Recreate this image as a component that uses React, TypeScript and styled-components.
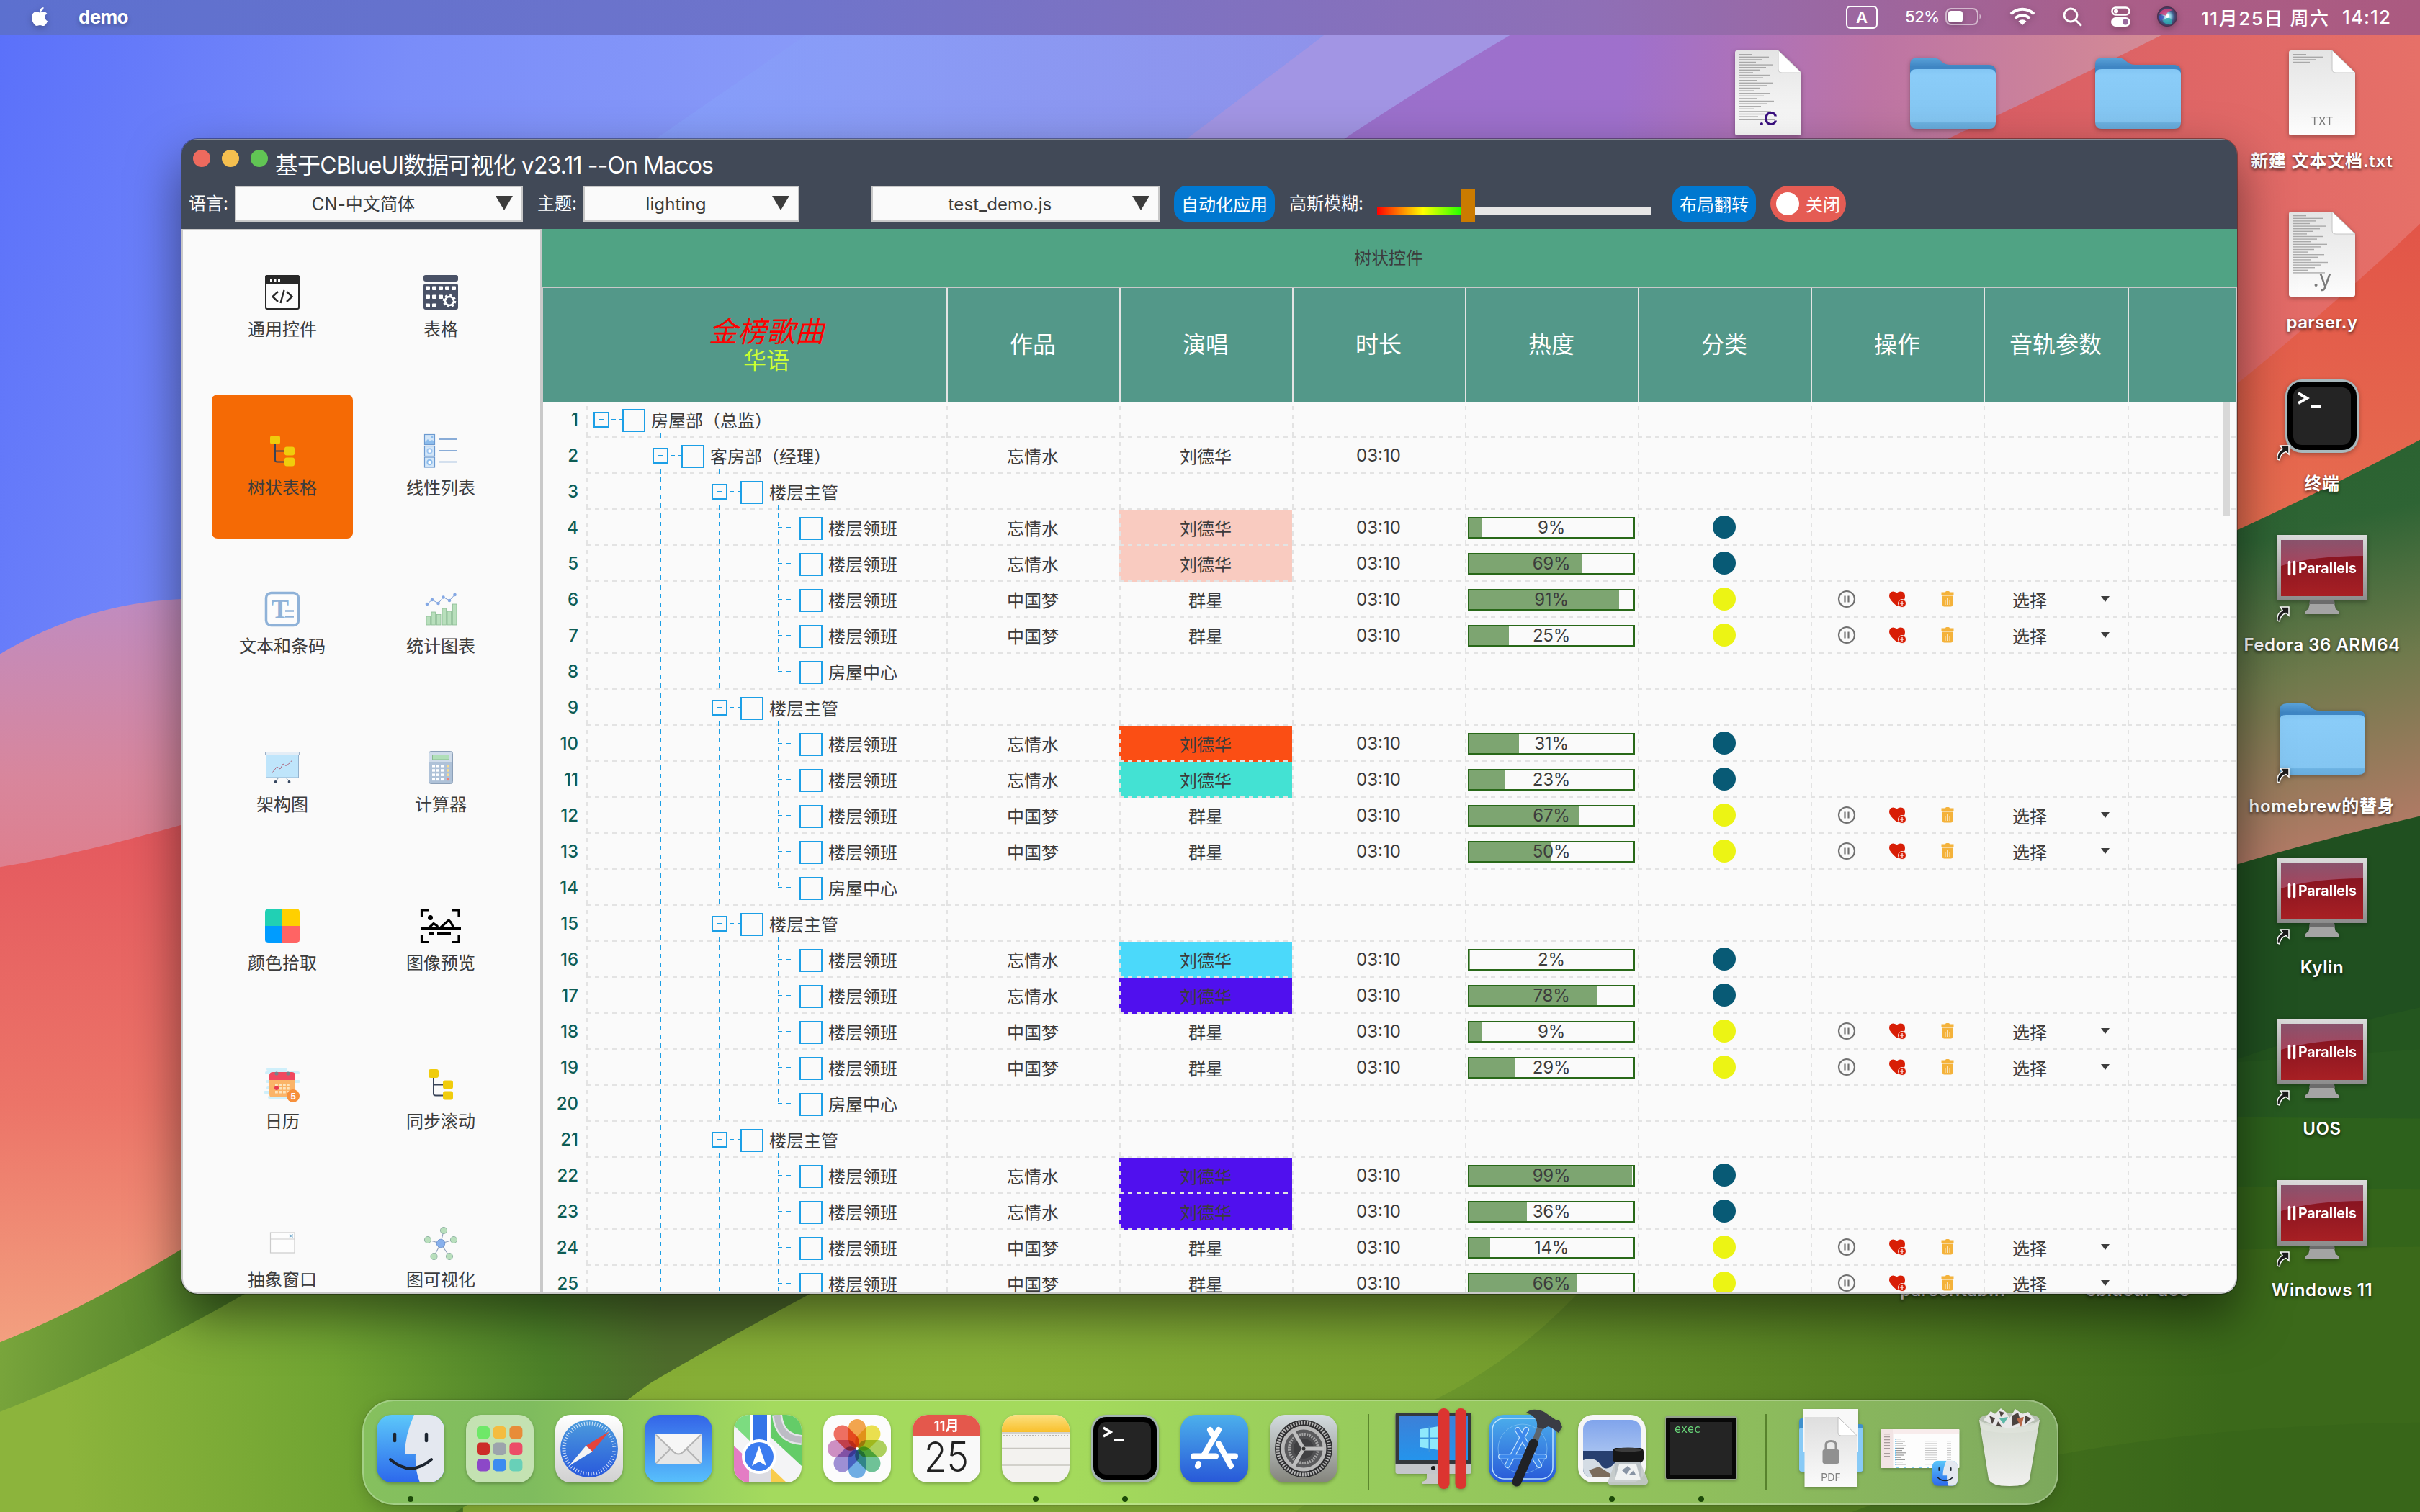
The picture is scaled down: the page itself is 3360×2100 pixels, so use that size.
import React from "react";
import styled, { createGlobalStyle, css } from "styled-components";
import { FaApple } from "react-icons/fa";

const sans = `Inter, "Noto Sans CJK SC", sans-serif`;

const GlobalStyle = createGlobalStyle`
  body { margin: 0; background: #3a661c; }
  *, *::before, *::after { box-sizing: border-box; }
`;

/* ---------- desktop ---------- */

const Desktop = styled.div`
  position: relative;
  width: 3360px;
  height: 2100px;
  overflow: hidden;
  font-family: ${sans};
  color: #3c3c3c;
`;

const WallpaperSvg = styled.svg`
  position: absolute;
  inset: 0;
  width: 100%;
  height: 100%;
`;

function Wallpaper() {
  return (
    <WallpaperSvg viewBox="0 0 1568 980" preserveAspectRatio="none">
      <defs>
        <linearGradient id="sky" gradientUnits="userSpaceOnUse" x1="0" y1="0" x2="860" y2="240">
          <stop offset="0" stopColor="#5a70fa" />
          <stop offset="0.3" stopColor="#7a8df9" />
          <stop offset="0.6" stopColor="#8a9bf8" />
          <stop offset="1" stopColor="#8f92ea" />
        </linearGradient>
        <linearGradient id="skyLight" gradientUnits="userSpaceOnUse" x1="430" y1="0" x2="860" y2="0">
          <stop offset="0" stopColor="#86a0fb" />
          <stop offset="1" stopColor="#8f92ea" />
        </linearGradient>
        <linearGradient id="violet" gradientUnits="userSpaceOnUse" x1="870" y1="0" x2="1400" y2="70">
          <stop offset="0" stopColor="#9a70cc" />
          <stop offset="0.35" stopColor="#9f70cc" />
          <stop offset="0.65" stopColor="#bd74a4" />
          <stop offset="1" stopColor="#d68c94" />
        </linearGradient>
        <linearGradient id="leftPink" x1="0" y1="0" x2="0" y2="1">
          <stop offset="0" stopColor="#c08cc0" />
          <stop offset="0.5" stopColor="#d8869c" />
          <stop offset="1" stopColor="#e47880" />
        </linearGradient>
        <linearGradient id="leftRed" x1="0" y1="0" x2="0" y2="1">
          <stop offset="0" stopColor="#e4585e" />
          <stop offset="0.5" stopColor="#ec7468" />
          <stop offset="1" stopColor="#f4a884" />
        </linearGradient>
        <linearGradient id="rightRed" gradientUnits="userSpaceOnUse" x1="1265" y1="0" x2="1568" y2="0">
          <stop offset="0" stopColor="#d85c64" />
          <stop offset="1" stopColor="#e67068" />
        </linearGradient>
        <linearGradient id="rightOrange" x1="0" y1="0" x2="0" y2="1">
          <stop offset="0" stopColor="#e25548" />
          <stop offset="1" stopColor="#e87452" />
        </linearGradient>
        <linearGradient id="brown" gradientUnits="userSpaceOnUse" x1="1440" y1="300" x2="1500" y2="560">
          <stop offset="0" stopColor="#2a6230" />
          <stop offset="0.2" stopColor="#2e6434" />
          <stop offset="0.55" stopColor="#6f7a4c" />
          <stop offset="1" stopColor="#b87a68" />
        </linearGradient>
        <linearGradient id="grass" x1="0" y1="0" x2="1" y2="0">
          <stop offset="0" stopColor="#86ac34" />
          <stop offset="0.3" stopColor="#86b038" />
          <stop offset="0.6" stopColor="#759e2e" />
          <stop offset="1" stopColor="#557f24" />
        </linearGradient>
        <linearGradient id="grassFar" gradientUnits="userSpaceOnUse" x1="850" y1="0" x2="1440" y2="0">
          <stop offset="0" stopColor="#739e30" />
          <stop offset="0.6" stopColor="#558022" />
          <stop offset="1" stopColor="#3b691a" />
        </linearGradient>
        <linearGradient id="hillBack" gradientUnits="userSpaceOnUse" x1="0" y1="850" x2="160" y2="870">
          <stop offset="0" stopColor="#7aa63c" />
          <stop offset="1" stopColor="#467624" />
        </linearGradient>
        <linearGradient id="hillFront" gradientUnits="userSpaceOnUse" x1="40" y1="900" x2="430" y2="860">
          <stop offset="0" stopColor="#8cb43c" />
          <stop offset="0.45" stopColor="#70a432" />
          <stop offset="0.8" stopColor="#4c8028" />
          <stop offset="1" stopColor="#4e6c2c" />
        </linearGradient>
      </defs>
      <rect width="1568" height="980" fill="url(#sky)" />
      <path d="M555 0 Q490 45 422 92 L500 200 H1000 V0 Z" fill="url(#skyLight)" opacity="0.7" />
      <path d="M888 0 L769 90 L900 150 H1200 V0 Z" fill="#a295e4" />
      <path d="M1018 0 Q940 44 871 90 L871 140 H1568 V0 Z" fill="url(#violet)" />
      <path d="M1440 0 L1402 22 Q1330 58 1262 90 L1250 300 H1568 V0 Z" fill="url(#rightRed)" />
      <path d="M1568 145 Q1510 200 1449 249 V400 H1568 Z" fill="url(#rightOrange)" />
      <path d="M1568 285 Q1510 316 1440 348 V600 H1568 Z" fill="url(#brown)" />
      <path d="M1568 529 Q1500 545 1440 563 V980 H1568 Z" fill="#205020" />
      <path d="M1568 653 Q1500 668 1440 690 V980 H1568 Z" fill="#24561f" />
      <path d="M1568 680 L1440 689 V980 H1568 Z" fill="#275a20" />
      <path d="M1568 725 L1440 724 V980 H1568 Z" fill="#2d611c" />
      <path d="M1568 771 L1440 769 V980 H1568 Z" fill="#34651a" />
      <path d="M1568 808 L1440 810 V980 H1568 Z" fill="#3b691a" />
      <path d="M0 424 Q60 388 130 388 V620 H0 Z" fill="url(#leftPink)" />
      <path d="M0 562 Q60 552 130 531 V900 H0 Z" fill="url(#leftRed)" />
      <path d="M500 830 H1440 V980 H290 Z" fill="url(#grass)" />
      <path d="M1030 830 Q985 880 930 907 Q880 950 839 980 H1568 V830 Z" fill="url(#grassFar)" />
      <path d="M1200 980 Q1340 925 1568 922 V980 Z" fill="#33601a" opacity="0.35" />
      <path d="M0 870 Q60 846 130 802 H300 V980 H0 Z" fill="url(#hillBack)" />
      <path d="M0 915 Q80 884 158 839 L200 820 H560 Q480 862 422 896 Q360 942 295 980 H0 Z" fill="url(#hillFront)" />
    </WallpaperSvg>
  );
}

/* ---------- menu bar ---------- */

const MenuBar = styled.header`
  position: relative;
  display: flex;
  align-items: center;
  height: 48px;
  padding: 0 36px 2px 40px;
  background: linear-gradient(90deg, #5c70cf 0%, #6f74cb 33%, #8f6fb6 66%, #aa5e88 88%, #ab5a80 100%);
  color: #fff;
  font-size: 26px;
  svg { flex: none; filter: drop-shadow(0 3px 4px rgba(0, 0, 0, 0.25)); }
`;

const AppName = styled.div`
  margin-left: 39px;
  font-weight: 700;
  font-size: 26px;
  letter-spacing: -0.7px;
  text-shadow: 0 3px 6px rgba(0, 0, 0, 0.25);
  flex: 1;
`;

const InputBadge = styled.div`
  width: 44px;
  height: 32px;
  margin-top: 2px;
  border: 2px solid #fff;
  border-radius: 6px;
  display: grid;
  place-items: center;
  font-size: 22px;
  font-weight: 600;
`;

const StatusItem = styled.div<{ $gap: number; $size?: number; $width?: number; $track?: number }>`
  display: flex;
  align-items: center;
  white-space: nowrap;
  margin-left: ${(p) => p.$gap}px;
  width: ${(p) => (p.$width ? `${p.$width}px` : "auto")};
  font-size: ${(p) => p.$size ?? 26}px;
  font-weight: 500;
  letter-spacing: ${(p) => p.$track ?? -0.4}px;
`;

function TopBar() {
  return (
    <MenuBar>
      <FaApple size={30} color="#fff" />
      <AppName>demo</AppName>
      <InputBadge>A</InputBadge>
      <StatusItem $gap={38} $size={22} $width={56}>52%</StatusItem>
      <svg width="52" height="24" viewBox="0 0 52 24">
        <rect x="1" y="1" width="44" height="22" rx="7" fill="none" stroke="#fff" strokeOpacity="0.55" strokeWidth="2" />
        <rect x="4" y="4" width="20" height="16" rx="4" fill="#fff" />
        <path d="M47.5 8 Q51 12 47.5 16 Z" fill="#fff" fillOpacity="0.55" />
      </svg>
      <StatusItem $gap={37}>
        <svg width="36" height="26" viewBox="0 0 36 26" fill="none" stroke="#fff" strokeWidth="4">
          <path d="M2 9.500 A22.500 22.500 0 0 1 34 9.500" />
          <path d="M8 15.500 A14 14 0 0 1 28 15.500" />
          <path d="M18 25 L12.500 19.500 A8 8 0 0 1 23.500 19.500 Z" fill="#fff" stroke="none" />
        </svg>
      </StatusItem>
      <StatusItem $gap={38}>
        <svg width="27" height="27" viewBox="0 0 27 27" fill="none" stroke="#fff" strokeWidth="2.800" strokeLinecap="round">
          <circle cx="11" cy="11" r="9" />
          <path d="M18 18 L25 25" />
        </svg>
      </StatusItem>
      <StatusItem $gap={40}>
        <svg width="27" height="28" viewBox="0 0 27 28">
          <rect x="1.500" y="1.500" width="24" height="10" rx="5" fill="none" stroke="#fff" strokeWidth="2.500" />
          <circle cx="7" cy="6.500" r="3" fill="#fff" />
          <rect x="0" y="15" width="27" height="13" rx="6.500" fill="#fff" />
          <circle cx="20" cy="21.500" r="4" fill="#98689c" />
        </svg>
      </StatusItem>
      <StatusItem $gap={36}>
        <svg width="30" height="30" viewBox="0 0 30 30">
          <defs>
            <radialGradient id="siri">
              <stop offset="0" stopColor="#fff" />
              <stop offset="0.35" stopColor="#8fd0e0" />
              <stop offset="0.65" stopColor="#3f5a8c" />
              <stop offset="1" stopColor="#4a2a48" />
            </radialGradient>
          </defs>
          <circle cx="15" cy="15" r="14" fill="url(#siri)" />
          <path d="M4 11 Q10 1 23 6 Q13 8 14 14 Z" fill="#d8407a" opacity="0.8" />
          <path d="M16 16 Q24 18 21 26 Q12 27 9 21 Z" fill="#2fa8b0" opacity="0.85" />
          <path d="M3 14 Q7 12 12 15 Q8 20 5 21 Z" fill="#4058c0" opacity="0.8" />
          <circle cx="15.500" cy="14.500" r="2.500" fill="#fff" />
        </svg>
      </StatusItem>
      <StatusItem $gap={32} $width={195} $track={1.55}>11月25日 周六</StatusItem>
      <StatusItem $gap={1} $width={72} $track={1.1}>14:12</StatusItem>
    </MenuBar>
  );
}

/* ---------- desktop items ---------- */

const IconSpot = styled.div<{ $x: number; $y: number }>`
  position: absolute;
  left: ${(p) => p.$x - 128}px;
  top: ${(p) => p.$y}px;
  width: 256px;
  height: 190px;
  display: flex;
  flex-direction: column;
  align-items: center;
  svg { overflow: visible; filter: drop-shadow(0 2px 3px rgba(0, 0, 0, 0.3)); }
`;

const IconArt = styled.div<{ $lift?: number }>`
  height: 136px;
  display: flex;
  align-items: center;
  padding-bottom: ${(p) => p.$lift ?? 0}px;
`;

const IconLabel = styled.div<{ $pad: number; $track?: number }>`
  height: 36px;
  margin-top: ${(p) => p.$pad}px;
  line-height: 36px;
  color: #fff;
  font-size: 24px;
  font-weight: 600;
  letter-spacing: ${(p) => p.$track ?? 0.4}px;
  white-space: nowrap;
  text-shadow: 0 2px 4px rgba(0, 0, 0, 0.7);
`;

function Folder() {
  return (
    <svg width="119" height="99" viewBox="0 0 119 99">
      <defs>
        <linearGradient id="folderBack" x1="0" y1="0" x2="0" y2="1">
          <stop offset="0" stopColor="#5aa2d8" />
          <stop offset="0.25" stopColor="#3f86c4" />
        </linearGradient>
        <linearGradient id="folderFront" x1="0" y1="0" x2="0" y2="1">
          <stop offset="0" stopColor="#83c6f4" />
          <stop offset="0.1" stopColor="#8accf8" />
          <stop offset="0.88" stopColor="#84c6f2" />
          <stop offset="0.9" stopColor="#6cb2e2" />
          <stop offset="1" stopColor="#68acdc" />
        </linearGradient>
      </defs>
      <path d="M0 10 Q0 0 10 0 H30 Q38 0 43 5 Q48 10 56 10 H110 Q119 10 119 20 V50 H0 Z" fill="url(#folderBack)" />
      <path d="M0 24 Q0 16 9 16 H110 Q119 16 119 24 V90 Q119 99 110 99 H9 Q0 99 0 90 Z" fill="url(#folderFront)" />
    </svg>
  );
}

function Doc({ ext, color, lines, size }: { ext: string; color: string; lines: number; size: number }) {
  const rows = Array.from({ length: lines }, (_, i) => i);
  return (
    <svg width="92" height="118" viewBox="0 0 92 118">
      <defs>
        <linearGradient id="paper" x1="0" y1="0" x2="0" y2="1">
          <stop offset="0" stopColor="#e4e4e4" />
          <stop offset="0.6" stopColor="#f2f2f2" />
          <stop offset="1" stopColor="#fdfdfd" />
        </linearGradient>
      </defs>
      <path d="M3 0 H60 L92 31 V115 Q92 118 89 118 H3 Q0 118 0 115 V3 Q0 0 3 0 Z" fill="url(#paper)" />
      {rows.map((i) => (
        <rect key={i} x="6" y={5 + i * 3.6} width={18 + ((i * 23) % 32)} height="1.400" fill="#858585" opacity="0.65" />
      ))}
      <path d="M60 0 L92 31 H65 Q60 31 60 26 Z" fill="#fff" stroke="#c4c4c4" strokeWidth="1" />
      <text x="46" y="104" textAnchor="middle" fontFamily={sans} fontSize={size} fontWeight={ext === ".C" ? 600 : 400} fill={color}>{ext}</text>
    </svg>
  );
}

function TerminalTile() {
  return (
    <svg width="102" height="102" viewBox="0 0 102 102">
      <rect x="0" y="0" width="102" height="102" rx="23" fill="#a8b8bc" />
      <rect x="3" y="3" width="96" height="95" rx="20" fill="#000" />
      <rect x="11" y="11" width="80" height="80" rx="12" fill="#242424" />
      <path d="M18 19 L30 26 L18 33" fill="none" stroke="#fff" strokeWidth="4" />
      <path d="M35 38 H49" stroke="#fff" strokeWidth="4" />
    </svg>
  );
}

function Monitor() {
  return (
    <svg width="126" height="111" viewBox="0 0 126 111">
      <defs>
        <linearGradient id="bezel" x1="0" y1="0" x2="0" y2="1">
          <stop offset="0" stopColor="#dcdcdc" />
          <stop offset="1" stopColor="#8c8c8c" />
        </linearGradient>
        <linearGradient id="screenRed" x1="0" y1="0" x2="0" y2="1">
          <stop offset="0" stopColor="#7c1020" />
          <stop offset="1" stopColor="#a82024" />
        </linearGradient>
        <linearGradient id="glare" x1="0" y1="0" x2="0" y2="1">
          <stop offset="0" stopColor="#8c6480" />
          <stop offset="1" stopColor="#b0506c" />
        </linearGradient>
      </defs>
      <path d="M47 91 H79 L82 103 Q87 105 87 110 H39 Q39 105 44 103 Z" fill="#a4a4a4" />
      <path d="M46 91 H80 L81 96 H45 Z" fill="#6c6c6c" />
      <rect x="0" y="0" width="126" height="91" fill="url(#bezel)" />
      <rect x="6" y="7" width="114" height="78" fill="url(#screenRed)" />
      <path d="M6 7 H120 V29 Q50 29 6 43 Z" fill="url(#glare)" opacity="0.8" />
      <path d="M17.500 37.500 V54.500 M24.500 37.500 V54.500" stroke="#fff" strokeWidth="3.600" strokeLinecap="round" />
      <text x="30" y="53" fontFamily={sans} fontSize="20" fontWeight="700" fill="#fff" textLength="81" lengthAdjust="spacingAndGlyphs">Parallels</text>
    </svg>
  );
}

const AliasBadge = styled.svg`
  position: absolute;
  left: 65px;
  top: 108px;
`;

function Alias() {
  return (
    <AliasBadge width="18" height="22" viewBox="0 0 18 22">
      <path d="M5 1 H17 V13 L13 9.500 Q5 12 4 21 L1 20 Q0 10 8 5.500 Z" fill="#1c1c1c" stroke="#fff" strokeWidth="1.500" />
    </AliasBadge>
  );
}

function DesktopItems() {
  return (
    <>
      <IconSpot $x={2455} $y={61}><IconArt><Doc ext=".C" color="#3a1080" lines={26} size={26} /></IconArt></IconSpot>
      <IconSpot $x={2711} $y={61}><IconArt><Folder /></IconArt></IconSpot>
      <IconSpot $x={2968} $y={61}><IconArt><Folder /></IconArt></IconSpot>
      <IconSpot $x={3224} $y={61}>
        <IconArt><Doc ext="TXT" color="#7a7a7a" lines={4} size={16} /></IconArt>
        <IconLabel $pad={9} $track={0.8}>新建 文本文档.txt</IconLabel>
      </IconSpot>
      <IconSpot $x={3224} $y={285}>
        <IconArt><Doc ext=".y" color="#7a7a7a" lines={23} size={30} /></IconArt>
        <IconLabel $pad={9}>parser.y</IconLabel>
      </IconSpot>
      <IconSpot $x={3224} $y={510}>
        <IconArt><TerminalTile /></IconArt>
        <Alias />
        <IconLabel $pad={8}>终端</IconLabel>
      </IconSpot>
      <IconSpot $x={3224} $y={734}>
        <IconArt $lift={8}><Monitor /></IconArt>
        <Alias />
        <IconLabel $pad={8} $track={0.5}>Fedora 36 ARM64</IconLabel>
      </IconSpot>
      <IconSpot $x={3224} $y={958}>
        <IconArt><Folder /></IconArt>
        <Alias />
        <IconLabel $pad={8} $track={0.7}>homebrew的替身</IconLabel>
      </IconSpot>
      {["Kylin", "UOS", "Windows 11"].map((name, i) => (
        <IconSpot key={name} $x={3224} $y={1182 + i * 224}>
          <IconArt $lift={8}><Monitor /></IconArt>
          <Alias />
          <IconLabel $pad={8} $track={0.6}>{name}</IconLabel>
        </IconSpot>
      ))}
      <IconSpot $x={2711} $y={1630}><IconArt /><IconLabel $pad={8}>parser.tab.h</IconLabel></IconSpot>
      <IconSpot $x={2968} $y={1630}><IconArt /><IconLabel $pad={8}>cblueui-doc</IconLabel></IconSpot>
    </>
  );
}

/* ---------- application window ---------- */

const AppWindow = styled.main`
  position: absolute;
  left: 252px;
  top: 193px;
  width: 2854px;
  height: 1604px;
  display: flex;
  flex-direction: column;
  border-radius: 22px;
  overflow: hidden;
  background: #414957;
`;

const WindowShadow = styled.div`
  position: absolute;
  left: 252px;
  top: 193px;
  width: 2854px;
  height: 1604px;
  border-radius: 22px;
  box-shadow: 0 0 0 1px rgba(0, 0, 0, 0.35), 0 30px 70px rgba(0, 0, 0, 0.5);
`;

const WindowHead = styled.div`
  flex: none;
  height: 125px;
  box-shadow: inset 0 2px 0 #8a8f98;
`;

const TitleRow = styled.div`
  display: flex;
  align-items: flex-start;
  height: 65px;
  padding: 15px 0 0 16px;
`;

const Light = styled.span<{ $color: string }>`
  width: 24px;
  height: 24px;
  border-radius: 50%;
  margin-right: 16px;
  background: ${(p) => p.$color};
`;

const WindowTitle = styled.h1`
  margin: 0 0 0 -6px;
  line-height: 43px;
  font-size: 32px;
  font-weight: 400;
  color: #fff;
  letter-spacing: -0.88px;
  white-space: pre;
`;

const Toolbar = styled.div`
  display: flex;
  height: 50px;
  padding-left: 10px;
`;

const ToolLabel = styled.label<{ $width: number; $gap?: number }>`
  flex: none;
  width: ${(p) => p.$width}px;
  margin-left: ${(p) => p.$gap ?? 0}px;
  line-height: 49px;
  font-size: 24px;
  color: #fff;
  white-space: nowrap;
`;

const SelectBox = styled.div<{ $width: number; $gap?: number }>`
  flex: none;
  display: flex;
  align-items: center;
  width: ${(p) => p.$width}px;
  margin-left: ${(p) => p.$gap ?? 0}px;
  border: 2px solid #c8c8c8;
  background: #fafafa;
  font-size: 24px;
  letter-spacing: 0.1px;
  span { flex: 1; text-align: center; line-height: 47px; padding-right: 7px; }
  svg { margin: 0 12px 2px 0; }
`;

const PillButton = styled.button<{ $width: number; $gap: number }>`
  flex: none;
  width: ${(p) => p.$width}px;
  margin-left: ${(p) => p.$gap}px;
  padding: 0 0 1px;
  border: 0;
  border-radius: 18px;
  background: #0078d0;
  color: #fff;
  font: 400 24px ${sans};
`;

const Slider = styled.div`
  flex: none;
  width: 380px;
  display: flex;
  align-items: flex-end;
`;

const SliderFill = styled.div`
  width: 116px;
  height: 10px;
  margin-bottom: 10px;
  background: linear-gradient(90deg, #ff0000, #ffff00 55%, #28ff00);
`;

const SliderKnob = styled.div`
  width: 20px;
  height: 46px;
  background: #cb7b00;
`;

const SliderRest = styled.div`
  flex: 1;
  height: 10px;
  margin-bottom: 10px;
  background: #e6e6e6;
`;

const Toggle = styled.div`
  flex: none;
  display: flex;
  align-items: center;
  width: 105px;
  height: 50px;
  margin-left: 20px;
  padding: 0 0 1px 8px;
  gap: 9px;
  border-radius: 25px;
  background: #e55c54;
  color: #fff;
  font-size: 24px;
  i { width: 32px; height: 32px; border-radius: 50%; background: #fff; }
`;

function Select({ text, width, gap }: { text: string; width: number; gap?: number }) {
  return (
    <SelectBox $width={width} $gap={gap}>
      <span>{text}</span>
      <svg width="24" height="20" viewBox="0 0 24 20"><path d="M0 0 H24 L12 20 Z" fill="#3c3c3c" /></svg>
    </SelectBox>
  );
}

const Body = styled.div`
  flex: 1;
  min-height: 0;
  display: flex;
`;

const Sidebar = styled.nav`
  flex: none;
  width: 500px;
  padding: 8px 20px 0 40px;
  border: 2px solid #c9c9c9;
  border-bottom-left-radius: 22px;
  background: #fafafa;
  display: grid;
  grid-template-columns: 196px 196px;
  grid-auto-rows: 200px;
  gap: 20px 24px;
  align-content: start;
  overflow: hidden;
`;

const NavTile = styled.a<{ $active?: boolean }>`
  display: flex;
  flex-direction: column;
  align-items: center;
  padding-top: 54px;
  border-radius: 8px;
  font-size: 24px;
  white-space: nowrap;
  color: #3c3c3c;
  background: ${(p) => (p.$active ? "#f56a05" : "transparent")};
  svg { flex: none; overflow: visible; }
  span { line-height: 36px; margin-top: 10px; }
`;

const TreeGlyph = () => (
  <g>
    <path d="M14 14 V37 Q14 39.500 17 39.500 H30 M14 24.500 H30" fill="none" stroke="#384358" strokeWidth="2" />
    <rect x="7" y="3" width="14" height="12" rx="3" fill="#f0cc0c" />
    <rect x="27" y="18.500" width="14" height="12" rx="3" fill="#f0cc0c" />
    <rect x="27" y="33.500" width="14" height="12" rx="3" fill="#f0cc0c" />
  </g>
);

const navItems: { label: string; art: React.ReactNode; active?: boolean }[] = [
  {
    label: "通用控件",
    art: (
      <g>
        <rect x="1" y="1" width="46" height="46" rx="2" fill="#fcfcfc" stroke="#282828" strokeWidth="2" />
        <path d="M0 3 Q0 0 3 0 H45 Q48 0 48 3 V13 H0 Z" fill="#282828" />
        <path d="M7 7.500 h3 M12.500 7.500 h3 M18 7.500 h3" stroke="#fff" strokeWidth="3" />
        <path d="M18 23 L10.500 30 L18 37 M30 23 L37.500 30 L30 37 M26.500 21 L21.500 39" fill="none" stroke="#282828" strokeWidth="2.400" />
      </g>
    ),
  },
  {
    label: "表格",
    art: (
      <g>
        <rect y="0" width="48" height="9" rx="3" fill="#495166" />
        <rect y="12" width="48" height="36" rx="3" fill="#495166" />
        {[3, 12, 21, 30, 39].map((x) => <rect key={x} x={x} y="15.500" width="6" height="5.500" rx="1" fill="#fff" />)}
        {[3, 12, 21].map((x) => <rect key={x} x={x} y="27.500" width="6" height="5.500" rx="1" fill="#fff" />)}
        {[3, 12].map((x) => <rect key={x} x={x} y="39.500" width="6" height="5.500" rx="1" fill="#fff" />)}
        <circle cx="36" cy="36" r="6" fill="none" stroke="#fff" strokeWidth="2.600" />
        <circle cx="36" cy="36" r="8" fill="none" stroke="#fff" strokeWidth="2.600" strokeDasharray="3.100 3.180" />
      </g>
    ),
  },
  { label: "树状表格", art: <TreeGlyph />, active: true },
  {
    label: "线性列表",
    art: (
      <g fill="#d3e6f8" stroke="#6c9ad0" strokeWidth="1.200">
        <rect x="1.500" y="1.500" width="14" height="14" />
        <rect x="1.500" y="17.500" width="14" height="14" />
        <rect x="1.500" y="33" width="14" height="14" />
        <path d="M2 15 V12 L6 8 L9 11 L12 9 L15 12 V15 Z" fill="#8cbcec" stroke="none" />
        <circle cx="12" cy="5" r="1.500" fill="#8cbcec" stroke="none" />
        <circle cx="8.500" cy="24.500" r="3.200" fill="#fff" stroke="#9cc4f0" strokeWidth="2" />
        <circle cx="8.500" cy="40" r="3.200" fill="#fff" stroke="#8cbcec" strokeWidth="2" />
        <path d="M21 8 H47 M21 24 H47 M21 39.500 H47" stroke="#6492cc" strokeWidth="1.400" />
      </g>
    ),
  },
  {
    label: "文本和条码",
    art: (
      <g>
        <rect x="1.500" y="1.500" width="45" height="45" rx="7" fill="#fcfcfc" stroke="#8fb2d8" strokeWidth="3.500" />
        <text x="9" y="36" fontFamily="Liberation Serif, serif" fontWeight="700" fontSize="36" fill="#8fb2d8">T</text>
        <path d="M28 26.500 H40 M28 34.500 H40" stroke="#8fb2d8" strokeWidth="2.600" />
      </g>
    ),
  },
  {
    label: "统计图表",
    art: (
      <g>
        {[[4, 34], [11, 28], [18.5, 31.5], [26, 23], [33, 27], [40.5, 17]].map(([x, y]) => (
          <rect key={x} x={x} y={y} width="5.500" height={46 - y} fill="#b8dfbc" stroke="#8cbc94" strokeWidth="0.800" />
        ))}
        <path d="M5 17 L12 11 L20.500 16 L27.500 7.500 L36 12 L43.500 4" fill="none" stroke="#7c9cd4" strokeWidth="1" />
        {[[5, 17], [12, 11], [20.5, 16], [27.5, 7.5], [36, 12], [43.5, 4]].map(([x, y]) => (
          <circle key={x} cx={x} cy={y} r="2.300" fill="#84a8e4" />
        ))}
      </g>
    ),
  },
  {
    label: "架构图",
    art: (
      <g>
        <rect x="1.500" y="6" width="45" height="32" fill="#bfe5fb" stroke="#92b0cc" strokeWidth="1" />
        <rect x="0.500" y="2.500" width="47" height="4" fill="#e4edf6" stroke="#92a8c0" strokeWidth="0.900" />
        <path d="M10.500 30.500 L16.500 23 L21 26 L25 19 L29 21.500 L34 18 L38 13.500" fill="none" stroke="#b06c84" strokeWidth="1" />
        <path d="M19 38 L14 44 M29 38 L34 44" stroke="#7890a8" strokeWidth="1" />
        <circle cx="14.500" cy="44" r="1.900" fill="#384860" />
        <circle cx="33.500" cy="44" r="1.900" fill="#384860" />
      </g>
    ),
  },
  {
    label: "计算器",
    art: (
      <g>
        <rect x="7.500" y="1.500" width="33" height="45" rx="3" fill="#afc2d8" stroke="#8ca0b8" strokeWidth="1" />
        <path d="M8 5 Q8 2 11 2 H37 Q40 2 40 5 V16 H8 Z" fill="#d0dcea" />
        <rect x="12.500" y="6.500" width="23" height="6.500" fill="#b0dfb8" stroke="#88b890" strokeWidth="1" />
        {[0, 1, 2, 3].map((r) => (
          <g key={r}>
            {[12, 18, 24].map((x) => <rect key={x} x={x} y={20 + r * 6.2} width="4" height="3.500" fill="#fff" />)}
            <rect x="32" y={20 + r * 6.2} width="4" height="3.500" fill={r === 3 ? "#f08078" : "#f8dc90"} />
          </g>
        ))}
      </g>
    ),
  },
  {
    label: "颜色拾取",
    art: (
      <g>
        <path d="M24 24 V0 H5 Q0 0 0 5 V24 Z" fill="#21d0b4" />
        <path d="M24 24 V0 H43 Q48 0 48 5 V24 Z" fill="#ffd000" />
        <path d="M24 24 V48 H5 Q0 48 0 43 V24 Z" fill="#009cff" />
        <path d="M24 24 V48 H43 Q48 48 48 43 V24 Z" fill="#ff6464" />
      </g>
    ),
  },
  {
    label: "图像预览",
    art: (
      <g fill="none" stroke="#000" strokeWidth="3.200">
        <path d="M-2.500 11 V2 H7 M39 2 H49 V11 M-2.500 37 V46.500 H7 M39 46.500 H49 V37" />
        <path d="M-3 27.500 H52 M7 34.500 H15 M19 34.500 H38" strokeWidth="3" />
        <path d="M7 27 L14 20.500 L19 24 L20 27 M24 26 L35 16 L38 19 L42 27" />
        <circle cx="9.500" cy="12.500" r="3.500" fill="#000" stroke="none" />
      </g>
    ),
  },
  {
    label: "日历",
    art: (
      <g>
        <path d="M4 3 H29 M2 8 H46 M3 20 H47 M4 29 H40 M0 35 H42 M6 42 H36" stroke="#cfeffa" strokeWidth="4" strokeLinecap="round" />
        <rect x="6" y="8" width="36" height="34" rx="4" fill="#fbb468" />
        <path d="M6 18 V12 Q6 7 11 7 H37 Q42 7 42 12 V18 Z" fill="#f04860" />
        {[0, 1, 2].map((r) => [14, 20, 25, 30].map((x) => (
          <rect key={`${r}-${x}`} x={x} y={23 + r * 5} width="3.800" height="3.500" fill="#fde4bc" />
        )))}
        <circle cx="16" cy="29" r="3" fill="#e83c50" />
        <circle cx="16" cy="9" r="2.600" fill="#788088" />
        <circle cx="32" cy="9" r="2.600" fill="#788088" />
        <circle cx="39" cy="40" r="9" fill="#f6903c" />
        <text x="39" y="44.500" textAnchor="middle" fontFamily={sans} fontWeight="700" fontSize="12" fill="#fff">5</text>
      </g>
    ),
  },
  { label: "同步滚动", art: <TreeGlyph /> },
  {
    label: "抽象窗口",
    art: (
      <g fill="none" stroke="#cccccc" strokeWidth="1.200">
        <rect x="7.500" y="10" width="33.500" height="28" fill="#fdfdfd" />
        <path d="M7.500 19 H41" />
        <path d="M34 12.500 L38.500 16.500 M38.500 12.500 L34 16.500" stroke="#6ca4c8" />
      </g>
    ),
  },
  {
    label: "图可视化",
    art: (
      <g stroke="#8cb0a0" strokeWidth="0.900">
        <path d="M24 25 L28 7 M24 25 L6 20 M24 25 L42 20 M24 25 L14.500 43 M24 25 L36 43" stroke="#8c9cb8" strokeWidth="1.100" />
        {[[28, 7], [6, 20], [42, 20], [14.5, 43], [36, 43]].map(([x, y]) => (
          <circle key={x} cx={x} cy={y} r="4.600" fill="#b8dfbc" />
        ))}
        <circle cx="24" cy="25" r="5.800" fill="#88b0ec" stroke="#6c94d0" />
      </g>
    ),
  },
];

const Main = styled.section`
  flex: 1;
  min-width: 0;
  display: flex;
  flex-direction: column;
`;

const PanelTitle = styled.div`
  flex: none;
  height: 80px;
  padding: 0 2px 3px 0;
  background: #50a384;
  display: flex;
  align-items: center;
  justify-content: center;
  font-size: 24px;
`;

const TableFrame = styled.div`
  flex: 1;
  min-height: 0;
  border: 2px solid #c9c9c9;
  border-bottom-right-radius: 22px;
  background: #fafafa;
  overflow: hidden;
  position: relative;
`;

const columns = css`
  display: grid;
  grid-template-columns: 60px 500px repeat(6, 240px) 200px 1fr;
`;

const HeaderRow = styled.div`
  ${columns}
  height: 158px;
  background: #539889;
  color: #fff;
  font-size: 32px;
`;

const HeadCell = styled.div<{ $bare?: boolean }>`
  display: flex;
  flex-direction: column;
  align-items: center;
  justify-content: center;
  padding-right: ${(p) => (p.$bare ? "0" : "2px")};
  border-left: ${(p) => (p.$bare ? "0" : "2px solid #e4e4e4")};
  line-height: 42px;
`;

const ChartTitle = styled.div`
  padding-top: 3px;
  font-size: 40px;
  font-style: italic;
  color: #ff0000;
  line-height: 40px;
`;

const ChartSub = styled.div`
  color: #ccff33;
  line-height: 40px;
`;

const dashX = "linear-gradient(90deg, #e3e3e3 6px, transparent 6px)";
const dashY = "linear-gradient(180deg, transparent 6px, #e3e3e3 6px)";

const Row = styled.div`
  ${columns}
  height: 50px;
  font-size: 24px;
`;

const Cell = styled.div<{ $fill?: string }>`
  position: relative;
  display: flex;
  align-items: center;
  justify-content: center;
  padding: 0 0 2px 0;
  background-color: ${(p) => p.$fill ?? "transparent"};
  background-image: ${dashX}, ${dashY};
  background-size: 12px 2px, 2px 12px;
  background-position: 0 100%, 0 0;
  background-repeat: repeat-x, repeat-y;
  letter-spacing: 0;
`;

const NumCell = styled.div`
  color: #0d5c54;
  text-align: right;
  padding-right: 11px;
  line-height: 50px;
  font-weight: 500;
`;

const blue = "#1c9fe6";
const guideY = `repeating-linear-gradient(180deg, transparent 0 5px, ${blue} 5px 11px, transparent 11px 12px)`;

const TreeCell = styled(Cell)`
  justify-content: flex-start;
  padding: 0 0 0 10px;
`;

const TreeText = styled.span`
  padding-bottom: 2px;
`;

const Spacer = styled.span`
  flex: none;
  width: 82px;
  height: 50px;
`;

const Guide = styled(Spacer)`
  background: ${guideY} 10px 0 / 2px 100% no-repeat;
`;

const Branch = styled.span<{ $last: boolean }>`
  flex: none;
  width: 40px;
  height: 50px;
  background: ${guideY} 10px 0 / 2px ${(p) => (p.$last ? "26px" : "100%")} no-repeat,
    linear-gradient(90deg, ${blue} 0 6px, transparent 6px 12px, ${blue} 12px 18px) 10px 24px / 18px 2px no-repeat;
`;

const Expander = styled.span<{ $root: boolean }>`
  position: relative;
  flex: none;
  width: 40px;
  height: 50px;
  background: linear-gradient(90deg, transparent 0 3px, ${blue} 3px 9px, transparent 9px 14px, ${blue} 14px 18px) 22px 24px / 18px 2px no-repeat,
    linear-gradient(${blue}, ${blue}) 10px 100% / 2px ${(p) => (p.$root ? "0" : "7px")} no-repeat;
  &::before {
    content: "";
    position: absolute;
    left: 0;
    top: 14px;
    width: 22px;
    height: 22px;
    border: 2px solid ${blue};
    background: linear-gradient(${blue}, ${blue}) 5px 8px / 8px 2px no-repeat;
  }
  &::after {
    content: "";
    position: absolute;
    left: 92px;
    bottom: 0;
    width: 2px;
    height: 6px;
    background: ${blue};
  }
`;

const Check = styled.span`
  flex: none;
  width: 32px;
  height: 32px;
  margin: 1px 8px 0 0;
  border: 2px solid ${blue};
`;

const Meter = styled.div`
  position: relative;
  width: 232px;
  height: 30px;
  margin: 2px 0 0 0;
  border: 2px solid #286818;
  display: grid;
  place-items: center;
  span { position: relative; letter-spacing: -0.2px; line-height: 26px; }
`;

const MeterFill = styled.div`
  position: absolute;
  left: 0;
  top: 0;
  bottom: 0;
  background: #7da571;
`;

const Dot = styled.span<{ $color: string }>`
  width: 32px;
  height: 32px;
  border-radius: 50%;
  background: ${(p) => p.$color};
`;

const Actions = styled(Cell)`
  gap: 44px;
  padding-bottom: 3px;
`;

const PickCell = styled(Cell)`
  justify-content: space-between;
  padding: 0 25px 2px 40px;
`;

const ScrollThumb = styled.div`
  position: absolute;
  right: 8px;
  top: 158px;
  width: 10px;
  height: 158px;
  background: #d8d8d8;
`;

type RowData = {
  depth: number;
  name: string;
  song?: string;
  singer?: string;
  fill?: string;
  pct?: number;
  kind?: "teal" | "yellow";
  last?: boolean;
};

const group = (fills: string[], p: number[]): RowData[] => [
  { depth: 2, name: "楼层主管" },
  { depth: 3, name: "楼层领班", song: "忘情水", singer: "刘德华", fill: fills[0], pct: p[0], kind: "teal" },
  { depth: 3, name: "楼层领班", song: "忘情水", singer: "刘德华", fill: fills[1], pct: p[1], kind: "teal" },
  { depth: 3, name: "楼层领班", song: "中国梦", singer: "群星", pct: p[2], kind: "yellow" },
  { depth: 3, name: "楼层领班", song: "中国梦", singer: "群星", pct: p[3], kind: "yellow" },
  { depth: 3, name: "房屋中心", last: true },
];

const rows: RowData[] = [
  { depth: 0, name: "房屋部（总监）" },
  { depth: 1, name: "客房部（经理）", song: "忘情水", singer: "刘德华" },
  ...group(["#f9cbc0", "#f9cbc0"], [9, 69, 91, 25]),
  ...group(["#fb4e14", "#43e2d3"], [31, 23, 67, 50]),
  ...group(["#4bd9fa", "#5010ee"], [2, 78, 9, 29]),
  ...group(["#5010ee", "#5010ee"], [99, 36, 14, 66]).slice(0, 5),
];

function ActionIcons() {
  return (
    <>
      <svg width="26" height="26" viewBox="0 0 26 26" fill="none" stroke="#707070">
        <circle cx="13" cy="13" r="11" strokeWidth="2.200" />
        <path d="M10.500 8.500 V17.500 M15.500 8.500 V17.500" strokeWidth="2.200" />
      </svg>
      <svg width="26" height="26" viewBox="0 0 26 26">
        <path d="M13 23 Q2 14 2 9 Q2 2.500 7.500 2.500 Q11 2.500 12.500 5 Q14 2.500 18 2.500 Q24 2.500 24 9 Q24 14 19 19 Z" fill="#d81e06" />
        <circle cx="20" cy="19" r="5.500" fill="#d81e06" stroke="#fafafa" strokeWidth="0.900" />
        <path d="M20 16 V22 M17 19 H23" stroke="#fff" strokeWidth="1.200" />
      </svg>
      <svg width="26" height="26" viewBox="0 0 26 26" fill="#f4b23a">
        <path d="M10 3.500 Q10 2 11.500 2 H14.500 Q16 2 16 3.500 H21.500 V7 H4.500 V3.500 Z" />
        <path d="M6 8.500 H20 V21 Q20 23.500 17.500 23.500 H8.500 Q6 23.500 6 21 Z" />
        <path d="M9.700 15 V21 M13 12 V21 M16.300 15 V21" stroke="#fff" strokeWidth="1.300" />
      </svg>
    </>
  );
}

function TreeRow({ row, index }: { row: RowData; index: number }) {
  return (
    <Row>
      <NumCell>{index + 1}</NumCell>
      <TreeCell>
        {row.depth > 0 && <Spacer />}
        {row.depth > 1 && <Guide />}
        {row.depth > 2 && <Guide />}
        {row.depth < 3 ? <Expander $root={row.depth === 0} /> : <Branch $last={!!row.last} />}
        <Check />
        <TreeText>{row.name}</TreeText>
      </TreeCell>
      <Cell>{row.song}</Cell>
      <Cell $fill={row.fill}>{row.singer}</Cell>
      <Cell>{row.song && "03:10"}</Cell>
      <Cell>
        {row.pct !== undefined && (
          <Meter>
            <MeterFill style={{ width: Math.floor(row.pct * 2.32 - 2.8) }} />
            <span>{row.pct}%</span>
          </Meter>
        )}
      </Cell>
      <Cell>{row.kind && <Dot $color={row.kind === "teal" ? "#085a75" : "#ecf414"} />}</Cell>
      <Actions>{row.kind === "yellow" && <ActionIcons />}</Actions>
      {row.kind === "yellow" ? (
        <PickCell>
          选择
          <svg width="12" height="8" viewBox="0 0 12 8"><path d="M0 0 H12 L6 8 Z" fill="#3c3c3c" /></svg>
        </PickCell>
      ) : (
        <Cell />
      )}
      <Cell />
    </Row>
  );
}

/* ---------- dock ---------- */

const DockBar = styled.footer`
  position: absolute;
  left: 503px;
  top: 1944px;
  width: 2355px;
  height: 146px;
  padding: 0 5px;
  display: flex;
  border-radius: 44px;
  background: linear-gradient(90deg, #86c05e 0, #7fbc5e 10%, #a4da5e 24%, #a4da5c 42%, #98cc5c 58%, #90c05c 78%, #84b05e 94%, #7ca85c 100%);
  box-shadow: inset 0 0 0 2px rgba(255, 255, 255, 0.25), 0 0 2px rgba(0, 0, 0, 0.35), 0 6px 20px rgba(0, 0, 0, 0.15);
`;

const DockSlot = styled.div<{ $running?: boolean }>`
  position: relative;
  flex: none;
  width: 124px;
  height: 146px;
  svg { display: block; overflow: visible; filter: drop-shadow(0 2px 2px rgba(0, 0, 0, 0.25)); }
  &::after {
    content: "";
    display: ${(p) => (p.$running ? "block" : "none")};
    position: absolute;
    left: 58px;
    top: 134px;
    width: 8px;
    height: 8px;
    border-radius: 50%;
    background: #1c4a08;
  }
`;

const DockRule = styled.div`
  flex: none;
  width: 2px;
  height: 106px;
  margin: 20px 27px 0;
  background: rgba(60, 100, 20, 0.65);
`;

const Petal = styled.rect`
  mix-blend-mode: multiply;
`;

const Tile = ({ fill }: { fill: string }) => <rect x="15" y="21" width="94" height="94" rx="21" fill={fill} />;

const Grad = ({ id, from, to }: { id: string; from: string; to: string }) => (
  <linearGradient id={id} x1="0" y1="0" x2="0" y2="1">
    <stop offset="0" stopColor={from} />
    <stop offset="1" stopColor={to} />
  </linearGradient>
);

const finderFace = (
  <g clipPath="url(#tileClip)">
    <rect x="15" y="21" width="94" height="94" fill="url(#finderBlue)" />
    <path d="M67 21 Q54 50 54 76 H69 Q68 98 75 115 H109 V21 Z" fill="#e4e8f0" />
    <path d="M40 48 V57 M84 48 V57" stroke="#1c2430" strokeWidth="4.500" strokeLinecap="round" />
    <path d="M34 83 Q62 108 91 83" fill="none" stroke="#1c2430" strokeWidth="4" strokeLinecap="round" />
  </g>
);

const petals = ["#f5a040", "#ece040", "#a8d050", "#64c090", "#64a8e4", "#9888d4", "#cc88c0", "#f06454"];
const padColors = ["#6ee868", "#f4bc40", "#e88c38", "#cc2c28", "#9ca4ac", "#ec4c68", "#8c48c8", "#3c8cf0", "#68d0b8"];

const dockApps: { key: string; running?: boolean; art?: React.ReactNode }[] = [
  { key: "finder", running: true, art: finderFace },
  {
    key: "launchpad",
    art: (
      <g>
        <Tile fill="#c4e2b2" />
        {padColors.map((c, i) => (
          <rect key={c} x={30 + (i % 3) * 22.7} y={37 + Math.floor(i / 3) * 22.5} width="18" height="17.500" rx="5" fill={c} />
        ))}
      </g>
    ),
  },
  {
    key: "safari",
    art: (
      <g>
        <Tile fill="url(#silver)" />
        <circle cx="62" cy="68" r="40" fill="url(#safariBlue)" />
        <circle cx="62" cy="68" r="35" fill="none" stroke="#fff" strokeWidth="5" strokeDasharray="1 2.665" opacity="0.8" />
        <path d="M90 44 L57.500 64 L66.500 72 Z" fill="#e4443c" />
        <path d="M34 92 L57.500 64 L66.500 72 Z" fill="#f4f4f4" />
      </g>
    ),
  },
  {
    key: "mail",
    art: (
      <g>
        <Tile fill="url(#mailBlue)" />
        <rect x="29.500" y="47" width="65" height="42" rx="4" fill="#e6e6e6" />
        <path d="M31 88 L53 66 M93 88 L71 66" stroke="#b4b4b4" strokeWidth="2" />
        <path d="M31 48 L55 72 Q62 79 69 72 L93 48 Z" fill="#f6f6f6" />
        <path d="M31 49 L55 72 Q62 79 69 72 L93 49" fill="none" stroke="#b4b4b4" strokeWidth="2" />
      </g>
    ),
  },
  {
    key: "maps",
    art: (
      <g clipPath="url(#tileClip)">
        <rect x="15" y="21" width="94" height="94" fill="#f4f4f6" />
        <path d="M15 21 H40 V60 L15 36 Z" fill="#7cdc80" />
        <path d="M66 21 H109 V92 L66 52 Z" fill="#64cc68" />
        <path d="M75 21 Q78 54 109 56" fill="none" stroke="#e4e4e8" strokeWidth="14" />
        <path d="M75 21 Q78 54 109 56" fill="none" stroke="#bcbcc4" strokeWidth="9" />
        <path d="M15 64 L40 88 V115 H15 Z" fill="#e47cc4" />
        <path d="M36 90 H66 V115 H36 Z" fill="#dcdce2" />
        <path d="M66 94 L88 115 H66 Z" fill="#f8cc4c" />
        <rect x="37" y="21" width="28" height="60" fill="#fff" />
        <rect x="41" y="21" width="20" height="60" fill="#3474e8" />
        <circle cx="50" cy="79" r="24" fill="#fff" />
        <circle cx="50" cy="79" r="20" fill="#3c7cf0" />
        <path d="M50 64 L60 92 L50 86 L40 92 Z" fill="#fff" />
      </g>
    ),
  },
  {
    key: "photos",
    art: (
      <g>
        <Tile fill="#fcfcfc" />
        {petals.map((c, i) => (
          <Petal key={c} x="50" y="27" width="24" height="40" rx="12" fill={c} opacity="0.92" transform={`rotate(${i * 45} 62 68)`} />
        ))}
        <circle cx="62" cy="68" r="2" fill="#fff" />
      </g>
    ),
  },
  {
    key: "calendar",
    art: (
      <g clipPath="url(#tileClip)">
        <rect x="15" y="21" width="94" height="94" fill="#f9f9f9" />
        <rect x="15" y="21" width="94" height="29" fill="#e4584c" />
        <text x="62" y="43" textAnchor="middle" fontFamily={sans} fontSize="19" fontWeight="600" fill="#fff">11月</text>
        <text x="62" y="100" textAnchor="middle" fontFamily={sans} fontSize="58" fontWeight="300" fill="#222" textLength="62" lengthAdjust="spacingAndGlyphs">25</text>
      </g>
    ),
  },
  {
    key: "notes",
    running: true,
    art: (
      <g clipPath="url(#tileClip)">
        <rect x="15" y="21" width="94" height="94" fill="#f3f2ef" />
        <rect x="15" y="21" width="94" height="24" fill="url(#noteYellow)" />
        <path d="M15 46 H109 M15 67.500 H109 M15 91 H109" stroke="#c8c6c0" strokeWidth="1.500" />
        <path d="M17 50 H109" stroke="#b8b6b0" strokeWidth="2" strokeDasharray="2 2" />
      </g>
    ),
  },
  {
    key: "terminal",
    running: true,
    art: (
      <g>
        <Tile fill="#a4b4b0" />
        <rect x="18" y="24" width="88" height="87" rx="18" fill="#000" />
        <rect x="25" y="31" width="73" height="73" rx="10" fill="#242424" />
        <path d="M32 39 L42 45 L32 51" fill="none" stroke="#fff" strokeWidth="3.500" />
        <path d="M47 56 H60" stroke="#fff" strokeWidth="3.500" />
      </g>
    ),
  },
  {
    key: "appstore",
    art: (
      <g>
        <Tile fill="url(#storeBlue)" />
        <g stroke="#fff" strokeWidth="8" strokeLinecap="round" fill="none">
          <path d="M68 42 L48 76 M40 89 L39 92" />
          <path d="M56 42 L60 49 M68 61 L85 92" />
          <path d="M33 78.500 H64 M80 78.500 H91" />
        </g>
      </g>
    ),
  },
  {
    key: "settings",
    art: (
      <g>
        <Tile fill="url(#steel)" />
        <circle cx="62" cy="68" r="40" fill="#2e2e30" />
        <circle cx="62" cy="68" r="36" fill="none" stroke="#b4b4b4" strokeWidth="5" strokeDasharray="2 1.770" />
        <circle cx="62" cy="68" r="29" fill="#5a5a5c" stroke="#b8b8b8" strokeWidth="5" />
        <circle cx="62" cy="68" r="20" fill="#505052" stroke="#a4a4a4" strokeWidth="4" strokeDasharray="2 1.500" />
        <circle cx="62" cy="68" r="14" fill="#404042" />
        <path d="M62 68 H90 M62 68 L48 44 M62 68 L48 92" stroke="#c0c0c0" strokeWidth="5" />
        <circle cx="62" cy="68" r="2.500" fill="#333" />
      </g>
    ),
  },
  { key: "rule-1" },
  {
    key: "parallels",
    art: (
      <g>
        <path d="M53 102 H74 V117 H46 V114 Q52 113 53 109 Z" fill="#c8c8c8" />
        <rect x="9.500" y="18" width="105.500" height="85" rx="3" fill="#c4c6ca" />
        <path d="M9.500 21 Q9.500 18 12.500 18 H112 Q115 18 115 21 V89 H9.500 Z" fill="#34383c" />
        <rect x="14" y="23" width="96" height="61" fill="url(#winBlue)" />
        <path d="M44 41 L70 37 V70 L44 66 Z" fill="#8fe8fc" />
        <path d="M44 53.500 H70 M56.500 36 V72" stroke="#3c94dc" strokeWidth="2" />
        <circle cx="62" cy="95" r="3" fill="#181818" />
        <rect x="69" y="12" width="15.500" height="112" rx="7.500" fill="#dc3430" />
        <rect x="92.500" y="12" width="15.500" height="112" rx="7.500" fill="#dc3430" />
      </g>
    ),
  },
  {
    key: "xcode",
    art: (
      <g>
        <Tile fill="url(#storeBlue)" />
        <rect x="20" y="26" width="84" height="84" rx="16" fill="none" stroke="#bfe4fc" strokeWidth="1.500" />
        <circle cx="62" cy="68" r="34" fill="none" stroke="#8cc8f4" strokeWidth="1" opacity="0.6" />
        <g stroke="#c4e4fc" strokeWidth="8" strokeLinecap="round">
          <path d="M67 42 L41 91 M55 42 L85 91 M32 79 H92" />
        </g>
        <g stroke="#3c88ec" strokeWidth="5.500" strokeLinecap="round">
          <path d="M67 42 L41 91 M55 42 L85 91 M32 79 H92" />
        </g>
        <path d="M88 34 L77 64" stroke="#5c646c" strokeWidth="8" />
        <path d="M77 61 L54 114" stroke="#202226" strokeWidth="13" strokeLinecap="round" />
        <path d="M67 18 Q76 10 92 17 L108 28 L113 28 L117 38 L112 46 L105 41 L98 37 Q94 38 91 41 L82 38 Q84 24 67 18 Z" fill="#3a3c44" />
      </g>
    ),
  },
  {
    key: "preview",
    running: true,
    art: (
      <g>
        <Tile fill="#f6f6f6" />
        <rect x="22" y="28" width="80" height="80" rx="13" fill="url(#skyBlue)" />
        <path d="M22 71 H102 V108 H35 Q22 108 22 95 Z" fill="#284070" />
        <path d="M22 84 Q38 78 46 90 T66 88 V108 H35 Q22 108 22 95 Z" fill="#d4dce4" />
        <path d="M30 98 L44 93 L60 103 V108 H36 Z" fill="#7c6c5c" />
        <path d="M67 86 H101 L112 112 Q113 119 105 119 H63 Q55 119 57 112 Z" fill="#c4caca" opacity="0.92" />
        <path d="M72 90 L66 112 H102 L96 90 Z" fill="#f0f2f2" />
        <path d="M76 98 L84 92 L88 96 L82 104 Z M86 104 L92 98 L95 104 Z" fill="#8894a4" />
        <rect x="63" y="67" width="43" height="20" rx="5" fill="#161616" />
        <ellipse cx="84.500" cy="69.500" rx="19" ry="3" fill="#3c3c3c" />
      </g>
    ),
  },
  {
    key: "exec",
    running: true,
    art: (
      <g>
        <rect x="12" y="23" width="100" height="88" rx="3" fill="#94a08c" />
        <rect x="13" y="25" width="98" height="85" rx="2" fill="#080808" />
        <rect x="19" y="31" width="86" height="73" fill="#242424" />
        <text x="25" y="46" fontFamily="DejaVu Sans Mono, monospace" fontSize="15" fill="#68d478">exec</text>
      </g>
    ),
  },
  { key: "rule-2" },
  {
    key: "pdf",
    art: (
      <g>
        <path d="M18 30 Q18 26 22 26 H98 V34 H103 Q107 34 107 38 V96 Q107 100 103 100 H22 Q18 100 18 96 Z" fill="#3f90cc" />
        <path d="M18 42 Q18 39 22 39 H103 Q107 39 107 42 V96 Q107 100 103 100 H22 Q18 100 18 96 Z" fill="#88caf6" />
        <rect x="24" y="13" width="76" height="60" fill="#f8f8f8" />
        <path d="M25.500 24 H72 L98.500 50 V121 H25.500 Z" fill="url(#silver2)" />
        <path d="M72 24 L98.500 50 H76 Q72 50 72 46 Z" fill="#fff" stroke="#c0c0c0" strokeWidth="1" />
        <rect x="50.500" y="69" width="23" height="20" rx="3" fill="#909090" />
        <path d="M55 70 V63 Q55 57.500 62 57.500 Q69 57.500 69 63 V70" fill="none" stroke="#909090" strokeWidth="3" />
        <text x="62" y="113" textAnchor="middle" fontFamily={sans} fontSize="14" fill="#808080">PDF</text>
      </g>
    ),
  },
  {
    key: "folder-window",
    art: (
      <g>
        <rect x="7.500" y="41" width="109" height="54" rx="1" fill="#fdfdfd" />
        <rect x="7.500" y="41" width="17" height="54" fill="#f2e4e4" />
        <rect x="24" y="41" width="92" height="7" fill="#f8ecec" />
        <path d="M28 94 H74" stroke="#58b8ec" strokeWidth="1.300" strokeDasharray="4 7" />
        {Array.from({ length: 12 }, (_, i) => (
          <g key={i} fill="#c4c4c4">
            <rect x="27" y={54 + i * 3.2} width="1.500" height="1.500" fill="#58b8ec" />
            <rect x="29" y={54 + i * 3.2} width={7 + ((i * 5) % 8)} height="1.200" fill="#999" />
            <rect x="69" y={54 + i * 3.2} width="17" height="1" />
            <rect x="99" y={54 + i * 3.2} width="6" height="1" />
          </g>
        ))}
        {[47, 51, 55, 59, 63, 67, 74, 78].map((y) => <rect key={y} x="12" y={y} width="8" height="1.300" fill="#a89c9c" />)}
        <g transform="translate(73.300 76.800) scale(0.374)">{finderFace}</g>
      </g>
    ),
  },
  {
    key: "trash",
    art: (
      <g>
        <path d="M20 28 L33 110 Q36 120 62 120 Q88 120 90 110 L104 28 Z" fill="url(#binGrey)" />
        <ellipse cx="62" cy="27" rx="41.500" ry="9" fill="#b8c0b4" />
        <path d="M26 28 L36 16 L42 20 L50 12 L58 18 L62 26 L70 13 L80 20 L88 17 L97 28 L84 36 L62 40 L40 36 Z" fill="#e8e8e8" />
        <path d="M34 22 L42 26 L38 34 Z M66 22 L74 18 L78 32 L66 36 Z M84 22 L92 26 L84 34 Z M48 16 L55 18 L50 24 Z M46 30 L52 38 L44 36 Z" fill="#4c4440" />
        <path d="M48 26 L60 24 L54 34 Z" fill="#5cb8a8" />
        <path d="M72 26 L82 24 L78 38 Z" fill="#b86848" />
        <path d="M20.500 29 Q24 37 62 40 Q100 37 103.500 29 L102 40 Q90 46 62 46 Q34 46 22 40 Z" fill="#e0e4dc" opacity="0.7" />
      </g>
    ),
  },
];

function Dock() {
  return (
    <DockBar>
      {dockApps.map((a) =>
        a.art ? (
          <DockSlot key={a.key} $running={a.running}>
            <svg width="124" height="146" viewBox="0 0 124 146">
              <defs>
                <clipPath id="tileClip"><rect x="15" y="21" width="94" height="94" rx="21" /></clipPath>
                <Grad id="finderBlue" from="#5cc8fa" to="#2c68ec" />
                <Grad id="silver" from="#ffffff" to="#d0d0d0" />
                <Grad id="silver2" from="#dedede" to="#fbfbfb" />
                <Grad id="safariBlue" from="#4c9cdc" to="#2858dc" />
                <Grad id="mailBlue" from="#3464e8" to="#58c0fc" />
                <Grad id="noteYellow" from="#fbe080" to="#f9c02c" />
                <Grad id="storeBlue" from="#4cb0ec" to="#2858d8" />
                <Grad id="steel" from="#d4dce0" to="#84847c" />
                <Grad id="winBlue" from="#3c80d8" to="#2494ec" />
                <Grad id="skyBlue" from="#80a4ec" to="#c4d8f4" />
                <Grad id="binGrey" from="#d4dad0" to="#f0f0ee" />
              </defs>
              {a.art}
            </svg>
          </DockSlot>
        ) : (
          <DockRule key={a.key} />
        )
      )}
    </DockBar>
  );
}

export default function App() {
  return (
    <Desktop>
      <GlobalStyle />
      <Wallpaper />
      <TopBar />
      <DesktopItems />
      <WindowShadow />
      <AppWindow>
        <WindowHead>
          <TitleRow>
            <Light $color="#ed6a5e" />
            <Light $color="#f5bf4f" />
            <Light $color="#61c554" />
            <WindowTitle>基于CBlueUI数据可视化 v23.11 --On Macos</WindowTitle>
          </TitleRow>
          <Toolbar>
            <ToolLabel $width={64}>语言:</ToolLabel>
            <Select text="CN-中文简体" width={400} />
            <ToolLabel $width={64} $gap={20}>主题:</ToolLabel>
            <Select text="lighting" width={300} />
            <Select text="test_demo.js" width={400} gap={100} />
            <PillButton $width={140} $gap={20}>自动化应用</PillButton>
            <ToolLabel $width={122} $gap={20}>高斯模糊:</ToolLabel>
            <Slider>
              <SliderFill />
              <SliderKnob />
              <SliderRest />
            </Slider>
            <PillButton $width={116} $gap={30}>布局翻转</PillButton>
            <Toggle><i />关闭</Toggle>
          </Toolbar>
        </WindowHead>
        <Body>
          <Sidebar>
            {navItems.map((n) => (
              <NavTile key={n.label} $active={n.active}>
                <svg width="48" height="48" viewBox="0 0 48 48">{n.art}</svg>
                <span>{n.label}</span>
              </NavTile>
            ))}
          </Sidebar>
          <Main>
            <PanelTitle>树状控件</PanelTitle>
            <TableFrame>
              <HeaderRow>
                <HeadCell $bare />
                <HeadCell $bare>
                  <ChartTitle>金榜歌曲</ChartTitle>
                  <ChartSub>华语</ChartSub>
                </HeadCell>
                {["作品", "演唱", "时长", "热度", "分类", "操作", "音轨参数", ""].map((t) => (
                  <HeadCell key={t}>{t}</HeadCell>
                ))}
              </HeaderRow>
              {rows.map((r, i) => (
                <TreeRow key={i} row={r} index={i} />
              ))}
              <ScrollThumb />
            </TableFrame>
          </Main>
        </Body>
      </AppWindow>
      <Dock />
    </Desktop>
  );
}
